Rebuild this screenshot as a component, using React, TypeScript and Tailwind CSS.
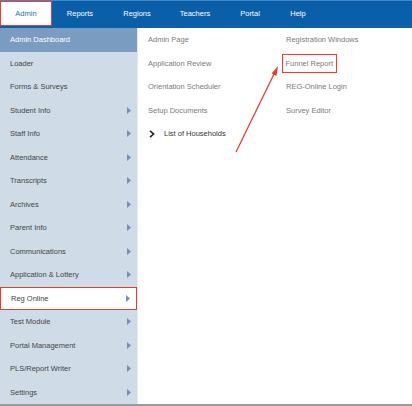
import React from "react";

const side: { label: string; arrow: boolean }[] = [
  { label: "Loader", arrow: false },
  { label: "Forms & Surveys", arrow: false },
  { label: "Student Info", arrow: true },
  { label: "Staff Info", arrow: true },
  { label: "Attendance", arrow: true },
  { label: "Transcripts", arrow: true },
  { label: "Archives", arrow: true },
  { label: "Parent Info", arrow: true },
  { label: "Communications", arrow: true },
  { label: "Application & Lottery", arrow: true },
  { label: "Reg Online", arrow: true },
  { label: "Test Module", arrow: true },
  { label: "Portal Management", arrow: true },
  { label: "PLS/Report Writer", arrow: true },
  { label: "Settings", arrow: true },
];

function Tri() {
  return (
    <svg width="4" height="7" viewBox="0 0 4 7" className="shrink-0">
      <path d="M0 0 L4 3.5 L0 7 Z" fill="#6f90b8" />
    </svg>
  );
}

export default function App() {
  const nav = [
    { t: "Reports", w: "w-[56px]" },
    { t: "Regions", w: "w-[58px]" },
    { t: "Teachers", w: "w-[58px]" },
    { t: "Portal", w: "w-[52px]" },
    { t: "Help", w: "w-[44px]" },
  ];
  return (
    <div
      className="relative w-[412px] h-[406px] bg-white overflow-hidden text-[7.5px]"
      style={{ fontFamily: '"Liberation Sans", Arial, sans-serif' }}
    >
      <div className="flex h-[28px] bg-[#0b5ea8] border-t border-[#3f86c6]">
        <div className="w-[52px] h-[25px] bg-white border-[1.5px] border-[#ef3b2c] flex items-center justify-center text-[#2d6fb5]">
          Admin
        </div>
        {nav.map((n) => (
          <div key={n.t} className={`${n.w} flex items-center justify-center text-white h-[25px]`}>
            {n.t}
          </div>
        ))}
      </div>
      <div className="flex h-[378px] border-b-2 border-[#9a9a9a]">
        <div className="w-[137px] bg-[#cfdce8] flex flex-col">
          <div className="h-[23.5px] bg-[#7b9cc1] text-white flex items-center pl-[10px]">
            Admin Dashboard
          </div>
          {side.map((s) => (
            <div
              key={s.label}
              className={`h-[23.5px] flex items-center justify-between pl-[10px] pr-[6px] text-[#444] ${
                s.label === "Reg Online" ? "bg-white border-[1.5px] border-[#ef3b2c] pl-[8.5px] pr-[4.5px]" : ""
              }`}
            >
              <span>{s.label}</span>
              {s.arrow && <Tri />}
            </div>
          ))}
        </div>
        <div className="flex-1 flex border-l border-[#e4ebf2] pl-[10px] text-[#7a7a7a]">
          <div className="w-[138px] flex flex-col">
            {["Admin Page", "Application Review", "Orientation Scheduler", "Setup Documents"].map((t) => (
              <div key={t} className="h-[23.5px] flex items-center">
                {t}
              </div>
            ))}
            <div className="h-[23.5px] flex items-center text-[#333]">
              <svg width="6" height="8" viewBox="0 0 6 8" className="ml-[1px] mr-[9px]">
                <path d="M1 0.8 L4.6 4 L1 7.2" fill="none" stroke="#222" strokeWidth="1.6" />
              </svg>
              List of Households
            </div>
          </div>
          <div className="flex flex-col">
            <div className="h-[23.5px] flex items-center">Registration Windows</div>
            <div className="h-[23.5px] flex items-center">
              <span className="border-[1.5px] border-[#ef3b2c] px-[2.5px] py-[3px] -ml-[4px]">Funnel Report</span>
            </div>
            <div className="h-[23.5px] flex items-center">REG-Online Login</div>
            <div className="h-[23.5px] flex items-center">Survey Editor</div>
          </div>
        </div>
      </div>
      <svg className="absolute left-0 top-0 pointer-events-none" width="412" height="406">
        <line x1="236" y1="152" x2="275" y2="72" stroke="#f03c2e" strokeWidth="1.3" />
        <path d="M278 66 L276.5 76 L271.5 73.5 Z" fill="#f03c2e" />
      </svg>
    </div>
  );
}
